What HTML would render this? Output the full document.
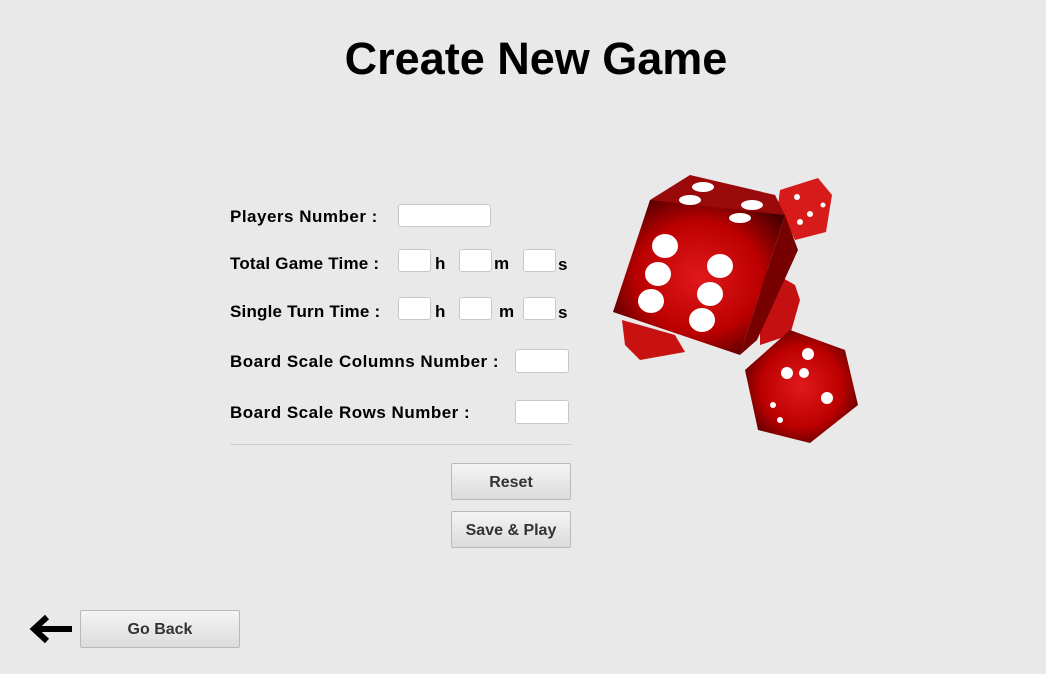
<!DOCTYPE html>
<html><head><style>
body{margin:0;width:1046px;height:674px;background:#e9e9e9;font-family:"Liberation Sans",sans-serif;position:relative;overflow:hidden}
.a{position:absolute}
h1{position:absolute;left:0;width:1072px;top:33px;margin:0;text-align:center;font-size:45px;font-weight:bold;color:#000}
.l{position:absolute;font-size:17px;font-weight:bold;color:#000;letter-spacing:0.5px}
.i{position:absolute;background:#fff;border:1px solid #c8c8c8;border-radius:3px;height:23px;box-sizing:border-box}
.b{position:absolute;background:linear-gradient(#f4f4f4,#dcdcdc);border:1px solid #b9b9b9;border-radius:2px;box-sizing:border-box;font-size:16px;font-weight:bold;color:#333;text-align:center}
</style></head><body>
<h1>Create New Game</h1>
<div class="l" style="left:230px;top:207px">Players Number :</div>
<div class="i" style="left:398px;top:204px;width:93px"></div>
<div class="l" style="left:230px;top:254px;letter-spacing:0.2px">Total Game Time :</div>
<div class="i" style="left:398px;top:249px;width:33px"></div><div class="l" style="left:435px;top:254px">h</div>
<div class="i" style="left:459px;top:249px;width:33px"></div><div class="l" style="left:494px;top:254px">m</div>
<div class="i" style="left:523px;top:249px;width:33px"></div><div class="l" style="left:558px;top:255px">s</div>
<div class="l" style="left:230px;top:302px;letter-spacing:0.2px">Single Turn Time :</div>
<div class="i" style="left:398px;top:297px;width:33px"></div><div class="l" style="left:435px;top:302px">h</div>
<div class="i" style="left:459px;top:297px;width:33px"></div><div class="l" style="left:499px;top:302px">m</div>
<div class="i" style="left:523px;top:297px;width:33px"></div><div class="l" style="left:558px;top:303px">s</div>
<div class="l" style="left:230px;top:352px">Board Scale Columns Number :</div>
<div class="i" style="left:515px;top:349px;width:54px;height:24px"></div>
<div class="l" style="left:230px;top:403px">Board Scale Rows Number :</div>
<div class="i" style="left:515px;top:400px;width:54px;height:24px"></div>
<div class="a" style="left:230px;top:444px;width:341px;height:1px;background:#cfcfcf"></div>
<div class="b" style="left:451px;top:463px;width:120px;height:37px;line-height:37px">Reset</div>
<div class="b" style="left:451px;top:511px;width:120px;height:37px;line-height:37px">Save &amp; Play</div>
<div class="b" style="left:80px;top:610px;width:160px;height:38px;line-height:38px">Go Back</div>
<svg class="a" style="left:28px;top:612px" width="46" height="34"><path d="M44 17H8M19 5L6 17L19 29" stroke="#000" stroke-width="6" fill="none"/></svg>
<svg class="a" style="left:600px;top:165px" width="270" height="290" viewBox="600 165 270 290">
<defs><radialGradient id="r" cx="50%" cy="50%" r="60%"><stop offset="0" stop-color="#e0191c"/><stop offset="0.6" stop-color="#b00"/><stop offset="1" stop-color="#4a0000"/></radialGradient></defs>
<polygon points="760,265 795,285 800,300 790,335 760,345" fill="#c41010"/>
<polygon points="622,320 675,335 685,352 640,360 625,345" fill="#c81212"/>
<polygon points="780,190 818,178 832,195 826,232 795,240 778,205" fill="#d71a1a"/>
<polygon points="745,370 790,330 845,350 858,405 810,443 758,430" fill="url(#r)"/>
<polygon points="650,200 690,175 775,195 785,215 740,240" fill="#9b0a0a"/>
<polygon points="650,200 785,215 740,355 613,312" fill="url(#r)"/>
<polygon points="785,215 740,355 757,340 798,250" fill="#700"/>
<g fill="#fff"><ellipse cx="665" cy="246" rx="13" ry="12"/><ellipse cx="658" cy="274" rx="13" ry="12"/><ellipse cx="651" cy="301" rx="13" ry="12"/><ellipse cx="720" cy="266" rx="13" ry="12"/><ellipse cx="710" cy="294" rx="13" ry="12"/><ellipse cx="702" cy="320" rx="13" ry="12"/>
<ellipse cx="703" cy="187" rx="11" ry="5"/><ellipse cx="690" cy="200" rx="11" ry="5"/><ellipse cx="752" cy="205" rx="11" ry="5"/><ellipse cx="740" cy="218" rx="11" ry="5"/>
<circle cx="808" cy="354" r="6"/><circle cx="787" cy="373" r="6"/><circle cx="804" cy="373" r="5"/><circle cx="827" cy="398" r="6"/><circle cx="773" cy="405" r="3"/><circle cx="780" cy="420" r="3"/>
<circle cx="797" cy="197" r="3"/><circle cx="810" cy="214" r="3"/><circle cx="800" cy="222" r="3"/><circle cx="823" cy="205" r="2.5"/></g>
</svg>
</body></html>
